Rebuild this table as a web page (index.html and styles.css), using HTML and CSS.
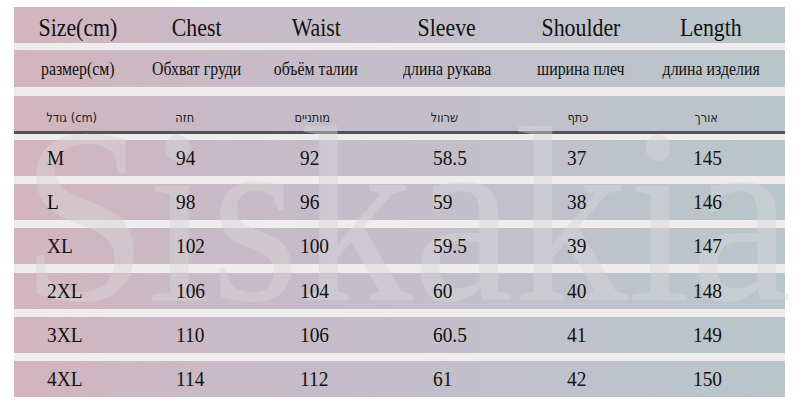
FILE: index.html
```html
<!DOCTYPE html>
<html lang="en">
<head>
<meta charset="utf-8">
<title>Size chart</title>
<link rel="stylesheet" href="styles.css">
</head>
<body>
<div class="sheet">
  <div class="wm" aria-hidden="true">Siskakia</div>

  <div class="row hd hd1">
    <div class="c"><span class="t">Size(cm)</span></div>
    <div class="c"><span class="t">Chest</span></div>
    <div class="c"><span class="t">Waist</span></div>
    <div class="c"><span class="t">Sleeve</span></div>
    <div class="c"><span class="t">Shoulder</span></div>
    <div class="c"><span class="t">Length</span></div>
  </div>

  <div class="row hd hd2">
    <div class="c"><span class="t">размер(см)</span></div>
    <div class="c"><span class="t">Обхват груди</span></div>
    <div class="c"><span class="t">объём талии</span></div>
    <div class="c"><span class="t">длина рукава</span></div>
    <div class="c"><span class="t">ширина плеч</span></div>
    <div class="c"><span class="t">длина изделия</span></div>
  </div>

  <div class="row hd hd3">
    <div class="c"><span class="t">גודל (cm)</span></div>
    <div class="c"><span class="t">חזה</span></div>
    <div class="c"><span class="t">מותניים</span></div>
    <div class="c"><span class="t">שרוול</span></div>
    <div class="c"><span class="t">כתף</span></div>
    <div class="c"><span class="t">אורך</span></div>
  </div>

  <div class="row dt first">
    <div class="c"><span class="t">M</span></div>
    <div class="c"><span class="t">94</span></div>
    <div class="c"><span class="t">92</span></div>
    <div class="c"><span class="t">58.5</span></div>
    <div class="c"><span class="t">37</span></div>
    <div class="c"><span class="t">145</span></div>
  </div>
  <div class="row dt">
    <div class="c"><span class="t">L</span></div>
    <div class="c"><span class="t">98</span></div>
    <div class="c"><span class="t">96</span></div>
    <div class="c"><span class="t">59</span></div>
    <div class="c"><span class="t">38</span></div>
    <div class="c"><span class="t">146</span></div>
  </div>
  <div class="row dt">
    <div class="c"><span class="t">XL</span></div>
    <div class="c"><span class="t">102</span></div>
    <div class="c"><span class="t">100</span></div>
    <div class="c"><span class="t">59.5</span></div>
    <div class="c"><span class="t">39</span></div>
    <div class="c"><span class="t">147</span></div>
  </div>
  <div class="row dt">
    <div class="c"><span class="t">2XL</span></div>
    <div class="c"><span class="t">106</span></div>
    <div class="c"><span class="t">104</span></div>
    <div class="c"><span class="t">60</span></div>
    <div class="c"><span class="t">40</span></div>
    <div class="c"><span class="t">148</span></div>
  </div>
  <div class="row dt">
    <div class="c"><span class="t">3XL</span></div>
    <div class="c"><span class="t">110</span></div>
    <div class="c"><span class="t">106</span></div>
    <div class="c"><span class="t">60.5</span></div>
    <div class="c"><span class="t">41</span></div>
    <div class="c"><span class="t">149</span></div>
  </div>
  <div class="row dt">
    <div class="c"><span class="t">4XL</span></div>
    <div class="c"><span class="t">114</span></div>
    <div class="c"><span class="t">112</span></div>
    <div class="c"><span class="t">61</span></div>
    <div class="c"><span class="t">42</span></div>
    <div class="c"><span class="t">150</span></div>
  </div>
</div>
</body>
</html>
```
FILE: styles.css
```css
html, body {
  margin: 0;
  padding: 0;
  background: #ffffff;
}

body {
  font-family: "Liberation Serif", "Times New Roman", serif;
  color: #111111;
}

.sheet {
  position: relative;
  width: 771px;
  margin: 7px 0 0 14px;
  background: #eeeced;
  display: flex;
  flex-direction: column;
}

.wm {
  position: absolute;
  left: 7px;
  top: 84px;
  font-family: "Liberation Serif", "Times New Roman", serif;
  font-size: 250px;
  line-height: 1;
  color: rgba(216, 214, 216, 0.45);
  transform: scaleX(0.91);
  transform-origin: left top;
  white-space: nowrap;
  z-index: 1;
  pointer-events: none;
}

.row {
  display: grid;
  grid-template-columns: 128px 110px 128px 134px 134px 1fr;
  background: linear-gradient(to right, #d4b4bd 0%, #cab9c5 20%, #c4bdca 45%, #c0c1cb 70%, #bbc4ca 88%, #b8c6ca 100%);
}

.c {
  display: flex;
  align-items: center;
  min-width: 0;
}

.t {
  display: inline-block;
  position: relative;
  z-index: 2;
  white-space: nowrap;
}

/* header rows */
.hd .c {
  justify-content: center;
}
.hd .t {
  transform-origin: center center;
}
.hd .c:last-child {
  padding-right: 11px;
}

.hd1 {
  height: 36px;
}
.hd1 .c {
  padding-top: 5px;
}
.hd1 .t {
  font-size: 26px;
  transform: scaleX(0.84);
}

.hd2 {
  height: 37px;
  margin-top: 7px;
}
.hd2 .c {
  padding-top: 2px;
}
.hd2 .t {
  font-size: 18px;
  transform: scaleX(0.88);
}

.hd3 {
  height: 35px;
  margin-top: 9px;
  border-bottom: 3px solid #4f5257;
}
.hd3 .c {
  padding-top: 7px;
}
.hd3 .t {
  font-family: "DejaVu Sans", "Liberation Sans", sans-serif;
  font-size: 13px;
  color: #222222;
  transform: scaleX(0.88);
}
.hd3 .c:nth-child(1) { padding-right: 12px; }
.hd3 .c:nth-child(2) { padding-right: 24px; }
.hd3 .c:nth-child(3) { padding-right: 8px; }
.hd3 .c:nth-child(4) { padding-right: 4px; }
.hd3 .c:nth-child(5) { padding-right: 6px; }
.hd3 .c:nth-child(6) { padding-right: 21px; }

/* data rows */
.dt {
  height: 36px;
  margin-top: 8.2px;
}
.dt.first {
  margin-top: 6px;
}
.dt .c {
  justify-content: flex-start;
}
.dt .t {
  font-size: 22px;
  transform: scaleX(0.88);
  transform-origin: left center;
}
.dt .c:nth-child(1) { padding-left: 33px; }
.dt .c:nth-child(2) { padding-left: 34px; }
.dt .c:nth-child(3) { padding-left: 48px; }
.dt .c:nth-child(4) { padding-left: 53px; }
.dt .c:nth-child(5) { padding-left: 53px; }
.dt .c:nth-child(6) { padding-left: 45px; }
```
